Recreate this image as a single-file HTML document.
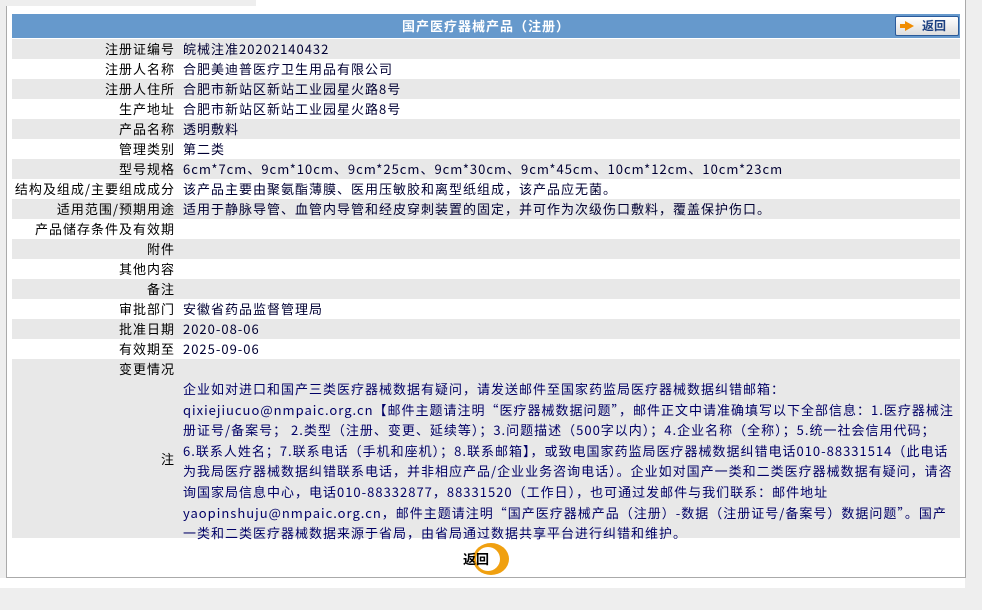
<!DOCTYPE html>
<html><head><meta charset="utf-8"><style>
html,body{margin:0;padding:0;background:#eeeeee;width:982px;height:610px;overflow:hidden;font-family:"Noto Sans CJK SC","Liberation Sans",sans-serif;font-size:13px;letter-spacing:1px;}
#wrap{position:absolute;left:6px;top:0;width:958px;height:577px;background:#fff;border-left:1px solid #aaa;border-right:1px solid #aaa;border-bottom:1px solid #aaa;}
#topgray{position:absolute;left:6px;top:0;width:250px;height:6px;background:#eeeeee;}
#whiteband{position:absolute;left:0;top:578px;width:965px;height:10px;background:#fff;}
#hdr{position:absolute;left:12px;top:14px;width:948px;height:24px;background:#6699cc;color:#fff;font-weight:bold;text-align:center;line-height:24px;}
#btn{position:absolute;left:895px;top:16px;width:62px;height:18px;border:1px solid #2a5a9a;border-radius:2px;background:linear-gradient(#fff,#ddd);color:#1a3f80;font-weight:bold;font-size:12px;line-height:18px;text-align:left;letter-spacing:0;}
#btn .ar{position:absolute;left:9px;top:4px;width:0;height:0;border-left:9px solid #f08c00;border-top:5px solid transparent;border-bottom:5px solid transparent;}
#btn .ar:before{content:"";position:absolute;left:-14px;top:-2px;width:5px;height:4px;background:#f08c00;}
#btn span{position:absolute;left:26px;top:0;}
.row{position:absolute;left:12px;width:948px;height:20px;line-height:20px;}
.g{background:#e8e8e8;}
.l{position:absolute;left:0;width:163px;text-align:right;color:#000;white-space:nowrap;}
.v{position:absolute;left:171px;color:#000033;white-space:nowrap;}
#note{position:absolute;left:12px;top:379px;width:948px;height:159px;background:#e8e8e8;}
#note .l{top:70px;line-height:20px;}
#note .t{position:absolute;left:171px;top:0;line-height:20.6px;color:#000066;white-space:nowrap;}
#back{position:absolute;left:463px;top:543px;font-weight:bold;font-size:13px;letter-spacing:0;}
#back .c{position:absolute;left:10px;top:0;width:36px;height:32px;border-radius:50%;background:#f0a010;}
#back .c2{position:absolute;left:13px;top:4px;width:24px;height:24px;border-radius:50%;background:#fff;}
#back span{position:absolute;left:0;top:6px;line-height:20px;white-space:nowrap;color:#000;}
</style></head><body>
<div id="wrap"></div>
<div id="topgray"></div>
<div id="whiteband"></div>
<div id="hdr">国产医疗器械产品（注册）</div>
<div id="btn"><div class="ar"></div><span>返回</span></div>

<div class="row g" style="top:39px"><div class="l">注册证编号</div><div class="v">皖械注准20202140432</div></div>
<div class="row" style="top:59px"><div class="l">注册人名称</div><div class="v">合肥美迪普医疗卫生用品有限公司</div></div>
<div class="row g" style="top:79px"><div class="l">注册人住所</div><div class="v">合肥市新站区新站工业园星火路8号</div></div>
<div class="row" style="top:99px"><div class="l">生产地址</div><div class="v">合肥市新站区新站工业园星火路8号</div></div>
<div class="row g" style="top:119px"><div class="l">产品名称</div><div class="v">透明敷料</div></div>
<div class="row" style="top:139px"><div class="l">管理类别</div><div class="v">第二类</div></div>
<div class="row g" style="top:159px"><div class="l">型号规格</div><div class="v">6cm*7cm、9cm*10cm、9cm*25cm、9cm*30cm、9cm*45cm、10cm*12cm、10cm*23cm</div></div>
<div class="row" style="top:179px"><div class="l">结构及组成/主要组成成分</div><div class="v">该产品主要由聚氨酯薄膜、医用压敏胶和离型纸组成，该产品应无菌。</div></div>
<div class="row g" style="top:199px"><div class="l">适用范围/预期用途</div><div class="v">适用于静脉导管、血管内导管和经皮穿刺装置的固定，并可作为次级伤口敷料，覆盖保护伤口。</div></div>
<div class="row" style="top:219px"><div class="l">产品储存条件及有效期</div><div class="v"></div></div>
<div class="row g" style="top:239px"><div class="l">附件</div></div>
<div class="row" style="top:259px"><div class="l">其他内容</div></div>
<div class="row g" style="top:279px"><div class="l">备注</div></div>
<div class="row" style="top:299px"><div class="l">审批部门</div><div class="v">安徽省药品监督管理局</div></div>
<div class="row g" style="top:319px"><div class="l">批准日期</div><div class="v">2020-08-06</div></div>
<div class="row" style="top:339px"><div class="l">有效期至</div><div class="v">2025-09-06</div></div>
<div class="row g" style="top:359px"><div class="l">变更情况</div></div>
<div id="note"><div class="l">注</div><div class="t">企业如对进口和国产三类医疗器械数据有疑问，请发送邮件至国家药监局医疗器械数据纠错邮箱：<br>qixiejiucuo@nmpaic.org.cn【邮件主题请注明“医疗器械数据问题”，邮件正文中请准确填写以下全部信息：1.医疗器械注<br>册证号/备案号； 2.类型（注册、变更、延续等）；3.问题描述（500字以内）；4.企业名称（全称）；5.统一社会信用代码；<br>6.联系人姓名；7.联系电话（手机和座机）；8.联系邮箱】，或致电国家药监局医疗器械数据纠错电话010-88331514（此电话<br>为我局医疗器械数据纠错联系电话，并非相应产品/企业业务咨询电话）。企业如对国产一类和二类医疗器械数据有疑问，请咨<br>询国家局信息中心，电话010-88332877，88331520（工作日），也可通过发邮件与我们联系：邮件地址<br>yaopinshuju@nmpaic.org.cn，邮件主题请注明“国产医疗器械产品（注册）-数据（注册证号/备案号）数据问题”。国产<br>一类和二类医疗器械数据来源于省局，由省局通过数据共享平台进行纠错和维护。</div></div>
<div id="back"><div class="c"></div><div class="c2"></div><span>返回</span></div>
</body></html>
